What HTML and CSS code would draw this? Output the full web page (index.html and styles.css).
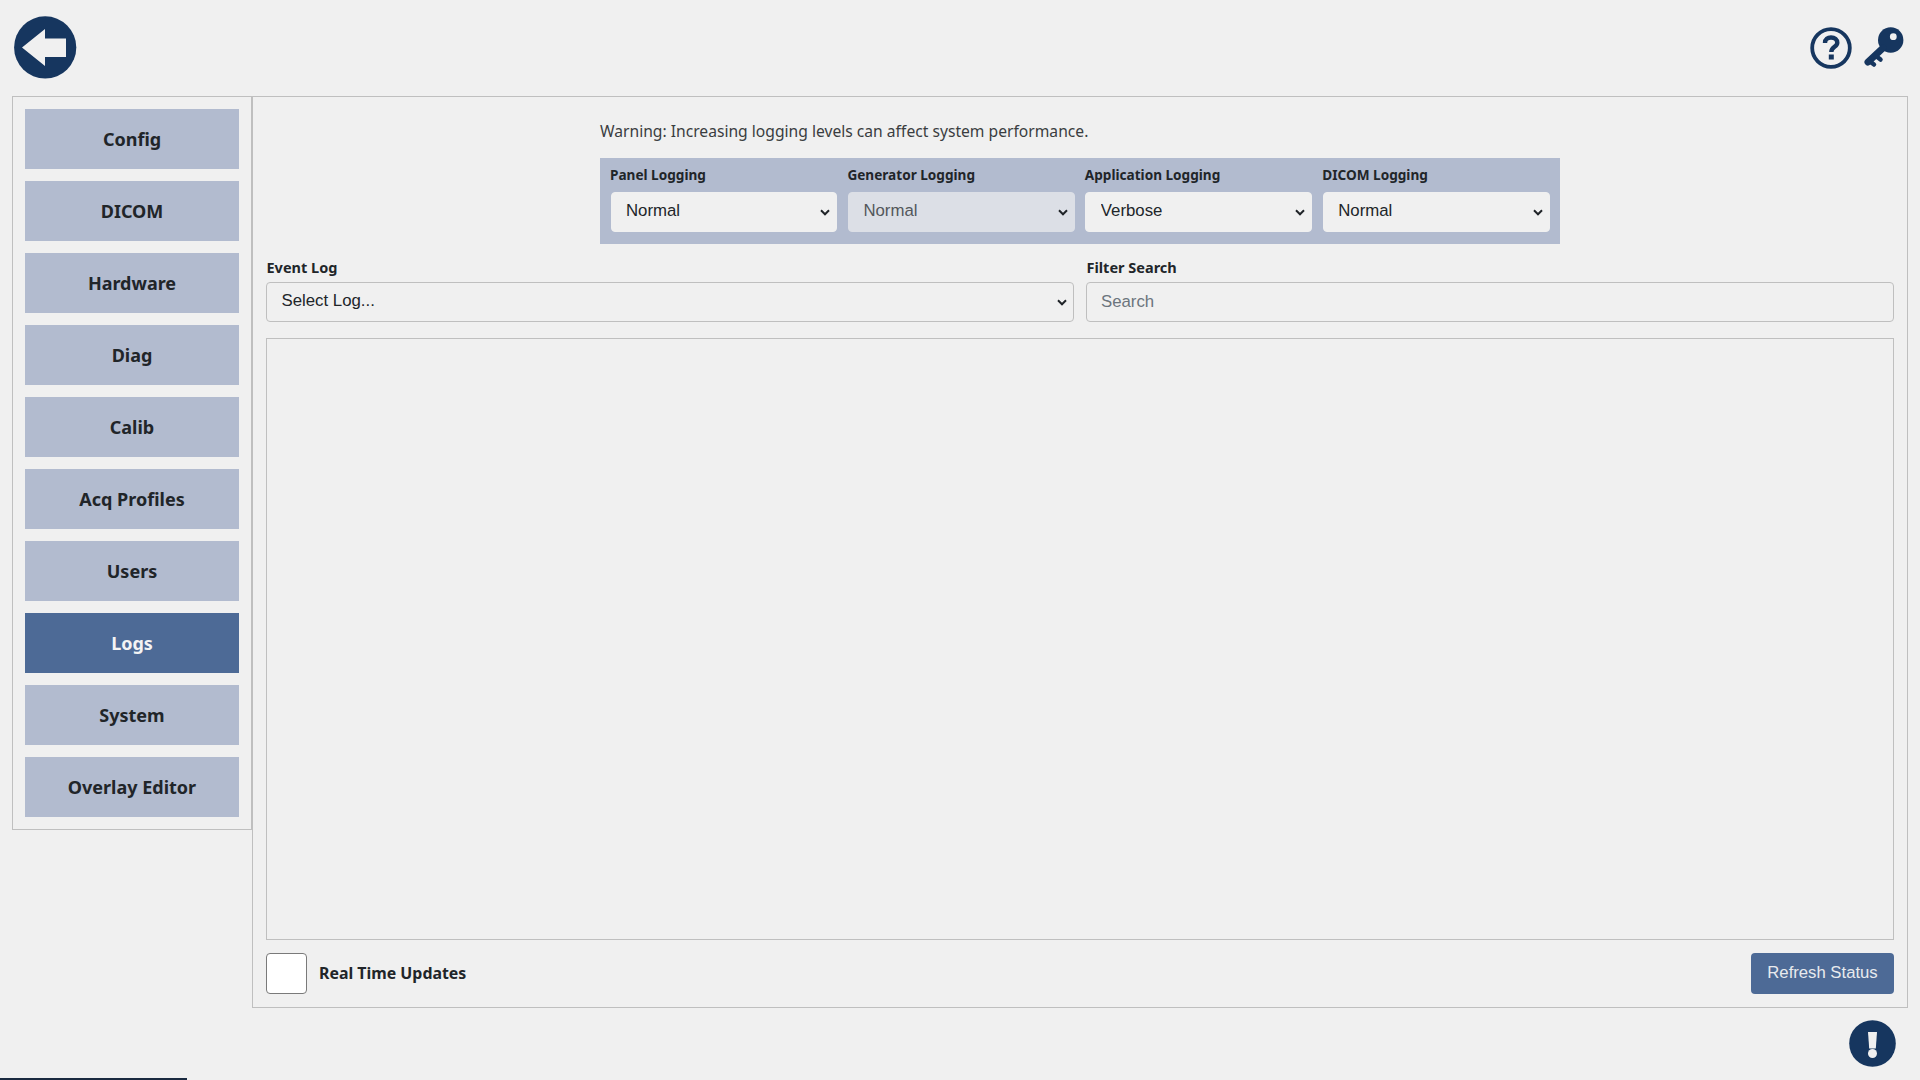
FILE: index.html
```html
<!DOCTYPE html>
<html lang="en">
<head>
<meta charset="utf-8">
<title>Logs</title>
<link rel="stylesheet" href="styles.css">
</head>
<body>
<div class="app">
  <header class="topbar">
    <svg class="back-icon" width="63" height="63" viewBox="0 0 63 63"><circle cx="31.200" cy="31.400" r="31.100" fill="#16365f"/><path d="M8 31.600L31 13V22.500H52V41H31V50Z" fill="#f0f0f0"/></svg>
    <div class="top-actions">
      <svg width="44" height="44" viewBox="0 0 44 44"><circle cx="22" cy="22" r="18.800" fill="none" stroke="#16365f" stroke-width="3.800"/><path d="M16 17C16 13.200 18.800 11.500 22 11.500C25.800 11.500 28.300 13.600 28.300 16.800C28.300 21 22.300 20.800 22.300 26" fill="none" stroke="#16365f" stroke-width="4.400"/><rect x="19.800" y="28.500" width="5" height="5" fill="#16365f"/></svg>
      <svg width="44" height="44" viewBox="0 0 44 44"><circle cx="28.700" cy="14" r="12.700" fill="#16365f"/><path d="M21 22L6 36" stroke="#16365f" stroke-width="7" stroke-linecap="round"/><path d="M8 35.500L12 38.500M14 30L18.500 33.500" stroke="#16365f" stroke-width="4.500" stroke-linecap="round"/><circle cx="31.300" cy="10.700" r="3.400" fill="#f0f0f0"/></svg>
    </div>
  </header>
  <div class="workspace">
    <nav class="sidebar">
      <a class="nav-item">Config</a>
      <a class="nav-item">DICOM</a>
      <a class="nav-item">Hardware</a>
      <a class="nav-item">Diag</a>
      <a class="nav-item">Calib</a>
      <a class="nav-item">Acq Profiles</a>
      <a class="nav-item">Users</a>
      <a class="nav-item active">Logs</a>
      <a class="nav-item">System</a>
      <a class="nav-item">Overlay Editor</a>
    </nav>
    <main class="content">
      <div class="levels">
        <p class="warning">Warning: Increasing logging levels can affect system performance.</p>
        <div class="level-panel">
          <div class="level"><label class="small-label">Panel Logging</label><select class="field"><option>Normal</option></select></div>
          <div class="level"><label class="small-label">Generator Logging</label><select class="field disabled-field" disabled><option>Normal</option></select></div>
          <div class="level"><label class="small-label">Application Logging</label><select class="field"><option>Verbose</option></select></div>
          <div class="level"><label class="small-label">DICOM Logging</label><select class="field"><option>Normal</option></select></div>
        </div>
      </div>
      <div class="filters">
        <div class="filter"><label class="label">Event Log</label><select class="field plain"><option>Select Log...</option></select></div>
        <div class="filter"><label class="label">Filter Search</label><input class="field plain" type="text" placeholder="Search"></div>
      </div>
      <div class="log-box"></div>
      <div class="bottom-row">
        <label class="realtime"><span class="checkbox"></span><span class="label-text">Real Time Updates</span></label>
        <button class="refresh" type="button">Refresh Status</button>
      </div>
    </main>
  </div>
  <footer class="footer">
    <svg width="47" height="47" viewBox="0 0 47 47"><circle cx="23.500" cy="23.500" r="23.300" fill="#16365f"/><path d="M19 12H28L26.800 28.500H20.200Z" fill="#f0f0f0"/><circle cx="23.500" cy="33.500" r="4.500" fill="#f0f0f0"/></svg>
  </footer>
  <div class="progress"></div>
</div>
</body>
</html>
```
FILE: styles.css
```css
* { box-sizing: border-box; }
html, body { margin: 0; height: 100%; }
body { background: #f0f0f0; color: #212529; font-family: "Noto Sans", "Open Sans", sans-serif; font-size: 16px; overflow: hidden; }
.app { position: relative; height: 1080px; display: flex; flex-direction: column; }
.topbar { height: 96px; flex: none; display: flex; justify-content: space-between; align-items: flex-start; padding: 16px 14px 0 14px; }
.back-icon { display: block; }
.top-actions { display: flex; gap: 9px; margin-top: 10px; }
.workspace { flex: none; height: 912px; display: flex; align-items: flex-start; padding: 0 12px; }
.sidebar { width: 240px; flex: none; border: 1px solid #bfbfbf; padding: 12px; display: flex; flex-direction: column; gap: 12px; }
.nav-item { height: 60px; display: flex; align-items: center; justify-content: center; background: #b2bbcf; font-weight: 700; font-size: 18px; color: #212529; }
.nav-item.active { background: #4d6a96; color: #f4f4f4; }
.content { flex: 1; height: 912px; border: 1px solid #bfbfbf; padding: 22px 13px 13px; display: flex; flex-direction: column; }
.levels { width: 960px; margin: 0 auto; }
.warning { margin: 0 0 15px; font-size: 15.650px; line-height: 24px; color: #3a3d40; }
.level-panel { background: #b2bbcf; height: 86px; padding: 8px 10.500px 0; display: grid; grid-template-columns: repeat(4, 1fr); column-gap: 10.670px; }
.level { display: flex; flex-direction: column; }
.small-label { font-size: 13.600px; font-weight: 700; line-height: 18px; margin-bottom: 8px; margin-left: -0.500px; }
.field { display: block; width: 100%; height: 40px; appearance: none; font-family: "Liberation Sans", Arial, sans-serif; font-size: 16.800px; color: #212529; background-color: #f0f0f0; border: 1px solid #f0f0f0; border-radius: 4px; padding: 0 14px; }
select.field { padding: 0 32px 3px 14.500px; background-image: url("data:image/svg+xml,%3Csvg xmlns='http://www.w3.org/2000/svg' width='10' height='7' viewBox='0 0 10 7'%3E%3Cpath d='M1 1.300L5 5.300L9 1.300' fill='none' stroke='%23212529' stroke-width='2'/%3E%3C/svg%3E"); background-repeat: no-repeat; background-position: right 6px center; }
.field::placeholder { color: #6c757d; }
.disabled-field { background-color: #dcdfe6; border-color: #dcdfe6; color: #53575b; opacity: 1; }
.plain { border-color: #bfbfbf; }
.filters { display: grid; grid-template-columns: 1fr 1fr; column-gap: 12px; margin-top: 13px; }
.label { display: block; font-size: 14.500px; font-weight: 700; line-height: 20px; margin-bottom: 5px; margin-left: 0.500px; }
.log-box { flex: 1; margin-top: 16px; border: 1px solid #bfbfbf; }
.bottom-row { flex: none; display: flex; justify-content: space-between; align-items: center; margin-top: 12px; height: 42px; }
.realtime { display: flex; align-items: center; gap: 12px; }
.checkbox { width: 41px; height: 41px; background: #fff; border: 1px solid #7a7a7a; border-radius: 4px; }
.label-text { font-size: 15.900px; font-weight: 700; }
.refresh { width: 143px; height: 41px; background: #4d6a96; color: #e8eaee; border: 0; border-radius: 4px; font-family: "Liberation Sans", Arial, sans-serif; font-size: 16.700px; padding: 0; }
.footer { flex: none; display: flex; justify-content: flex-end; padding: 12px 24px 0 0; }
.progress { position: absolute; left: 0; bottom: 0; width: 187px; height: 2px; background: #1a2a40; }
```
